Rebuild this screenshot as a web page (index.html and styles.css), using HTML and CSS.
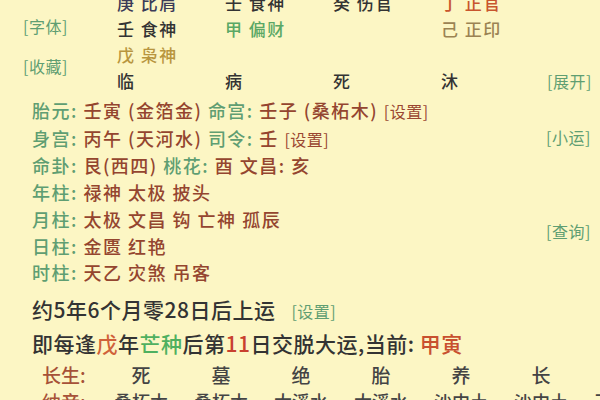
FILE: index.html
```html
<!DOCTYPE html>
<html lang="zh">
<head>
<meta charset="utf-8">
<link rel="stylesheet" href="styles.css">
</head>
<body>
<div class="page">
  <div class="top">
    <div class="side">
      <span class="link">[字体]</span>
      <span class="link second">[收藏]</span>
    </div>
    <div class="cell navy">庚 比肩</div>
    <div class="cell dark">壬 食神</div>
    <div class="cell dark">癸 伤官</div>
    <div class="cell red">丁 正官</div>
    <div class="cell spacer"></div>

    <div class="cell dark">壬 食神</div>
    <div class="cell green">甲 偏财</div>
    <div class="cell"></div>
    <div class="cell olive">己 正印</div>
    <div class="cell spacer"></div>

    <div class="cell gold">戊 枭神</div>
    <div class="cell"></div>
    <div class="cell"></div>
    <div class="cell"></div>
    <div class="cell spacer"></div>

    <div class="cell dark">临</div>
    <div class="cell dark">病</div>
    <div class="cell dark">死</div>
    <div class="cell dark">沐</div>
    <div class="cell"><span class="link">[展开]</span></div>
  </div>

  <div class="mid">
    <div class="rows">
      <div class="row"><span class="lab">胎元:</span> <span class="val">壬寅 (金箔金)</span> <span class="lab">命宫:</span> <span class="val">壬子 (桑柘木)</span> <span class="set">[设置]</span></div>
      <div class="row"><span class="lab">身宫:</span> <span class="val">丙午 (天河水)</span> <span class="lab">司令:</span> <span class="val">壬</span> <span class="set">[设置]</span></div>
      <div class="row"><span class="lab">命卦:</span> <span class="val">艮(西四)</span> <span class="lab">桃花:</span> <span class="val">酉 文昌: 亥</span></div>
      <div class="row"><span class="lab">年柱:</span> <span class="val">禄神 太极 披头</span></div>
      <div class="row"><span class="lab">月柱:</span> <span class="val">太极 文昌 钩 亡神 孤辰</span></div>
      <div class="row"><span class="lab">日柱:</span> <span class="val">金匮 红艳</span></div>
      <div class="row"><span class="lab">时柱:</span> <span class="val">天乙 灾煞 吊客</span></div>
    </div>
    <div class="side-right">
      <span class="link">[小运]</span>
      <span class="link query">[查询]</span>
    </div>
  </div>

  <div class="bottom">
    <div class="line1">约5年6个月零28日后上运<span class="link gap">[设置]</span></div>
    <div class="line2">即每逢<span class="hot">戊</span>年<span class="grn">芒种</span>后第<span class="num">11</span>日交脱大运,当前: <span class="cur">甲寅</span></div>
  </div>

  <div class="table">
    <div class="tlab">长生:</div>
    <div class="tv big">死</div><div class="tv big">墓</div><div class="tv big">绝</div><div class="tv big">胎</div><div class="tv big">养</div><div class="tv big">长</div><div class="tv"></div>
    <div class="tlab">纳音:</div>
    <div class="tv">桑柘木</div><div class="tv">桑柘木</div><div class="tv">大溪水</div><div class="tv">大溪水</div><div class="tv">沙中土</div><div class="tv">沙中土</div><div class="tv">天上火</div>
  </div>
</div>
</body>
</html>
```

FILE: styles.css
```css
html, body {
  margin: 0;
  padding: 0;
}
body {
  background: #fcf6c4;
  font-family: "Noto Sans CJK SC", "Noto Sans", sans-serif;
  font-weight: 500;
  color: #333;
}
.page {
  width: 600px;
  height: 400px;
  overflow: hidden;
  background: #fcf6c4;
}
.link {
  color: #5f9e72;
  font-size: 16px;
  font-weight: 400;
  letter-spacing: 0.5px;
}
.top {
  margin-top: -10px;
  display: grid;
  grid-template-columns: 117px repeat(4, 108px) 1fr;
  grid-auto-rows: 26px;
  line-height: 26px;
  font-size: 17px;
  letter-spacing: 1.5px;
}
.side {
  grid-row: 1 / span 4;
  grid-column: 1;
  display: flex;
  flex-direction: column;
  align-items: flex-start;
  padding-left: 23px;
  padding-top: 23px;
  letter-spacing: 0;
}
.side .second {
  margin-top: 14px;
}
.cell {
  white-space: nowrap;
}
.cell .link {
  margin-left: -2px;
}
.navy { color: #3c3c58; }
.dark { color: #333; }
.red { color: #c8552e; }
.green { color: #5aa865; }
.olive { color: #9b8353; }
.gold { color: #b8953e; }

.mid {
  display: flex;
  padding-top: 3px;
  padding-left: 32px;
  font-size: 18px;
  line-height: 26.7px;
}
.rows {
  flex: 1;
  letter-spacing: 1.5px;
}
.row {
  white-space: nowrap;
}
.lab { color: #5f9e72; }
.val { color: #94452f; }
.set {
  color: #9a4631;
  font-size: 16px;
  font-weight: 400;
  letter-spacing: 0.5px;
}
.side-right {
  width: 54px;
  display: flex;
  flex-direction: column;
  align-items: flex-start;
  padding-top: 26.7px;
}
.side-right .query {
  margin-top: 68px;
}

.bottom {
  padding-left: 32px;
  font-size: 21px;
  letter-spacing: 0.5px;
  color: #333;
  white-space: nowrap;
}
.line1 {
  margin-top: 8px;
  line-height: 30px;
}
.line1 .gap {
  margin-left: 16px;
}
.line2 {
  line-height: 34px;
}
.hot { color: #d0623a; }
.grn { color: #4fb060; }
.num { color: #c8402e; }
.cur { color: #c8502f; }

.table {
  margin-top: 1px;
  padding-left: 42px;
  display: grid;
  grid-template-columns: 59px repeat(7, 80px);
  grid-auto-rows: 27px;
  line-height: 27px;
  font-size: 18px;
  white-space: nowrap;
}
.tlab {
  color: #a65238;
  font-size: 19px;
}
.tv {
  text-align: center;
  color: #444;
}
.tv.big {
  font-size: 19px;
}
```
